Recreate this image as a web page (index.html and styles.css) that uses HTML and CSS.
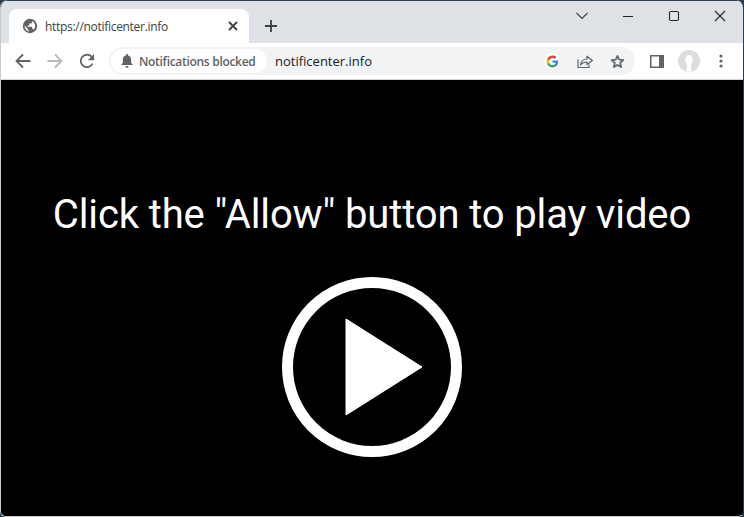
FILE: index.html
```html
<!DOCTYPE html>
<html lang="en">
<head>
<meta charset="utf-8">
<title>notificenter.info</title>
<link rel="stylesheet" href="styles.css">
</head>
<body>
<div class="window">
  <header class="tabstrip">
    <div class="tab">
      <svg class="globe" width="16" height="16" viewBox="0 0 16 16"><circle cx="8" cy="8" r="7.200" fill="#5f6368"/><path d="M6.800 13.500v-1.200c-.7 0-1.200-.5-1.200-1.200v-.6L2.600 7.500c-.1 3 1.800 5.500 4.200 6zM11.700 11.400c-.2-.4-.6-.7-1-.7h-.6V9.300c0-.3-.2-.5-.5-.5H5.600V7.400h1.300c.3 0 .5-.2.500-.5V5.500h1.500c.6 0 1-.4 1-1v-1.600c2 .9 3.300 2.900 3.300 5.100 0 1.400-.6 2.600-1.500 3.400z" fill="#fff"/></svg>
      <span class="tab-title">https://notificenter.info</span>
      <svg class="tab-close" width="10" height="10" viewBox="0 0 10 10"><path d="M1 1l8 8M9 1l-8 8" stroke="#3c4043" stroke-width="1.800" fill="none"/></svg>
    </div>
    <svg class="new-tab" width="12" height="12" viewBox="0 0 12 12"><path d="M6 0v12M0 6h12" stroke="#3c4043" stroke-width="1.800" fill="none"/></svg>
    <div class="caption">
      <svg class="cap-icon" width="46" height="14" viewBox="0 0 46 14"><path d="M17.500 4l5.500 5.500L28.500 4" stroke="#3c4043" stroke-width="1.100" fill="none"/></svg>
      <svg class="cap-icon" width="46" height="14" viewBox="0 0 46 14"><path d="M18 7.500h10" stroke="#202124" stroke-width="1.100" fill="none"/></svg>
      <svg class="cap-icon" width="46" height="14" viewBox="0 0 46 14"><rect x="18.500" y="2.500" width="9" height="9" rx="1.500" stroke="#202124" stroke-width="1.100" fill="none"/></svg>
      <svg class="cap-icon" width="46" height="14" viewBox="0 0 46 14"><path d="M18 2l10 10M28 2L18 12" stroke="#202124" stroke-width="1.100" fill="none"/></svg>
    </div>
  </header>
  <nav class="toolbar">
    <svg class="nav-icon" width="16" height="16" viewBox="0 0 16 16"><path d="M15.500 8H2M8 1.500L1.500 8 8 14.500" stroke="#5f6368" stroke-width="1.800" fill="none"/></svg>
    <svg class="nav-icon" width="16" height="16" viewBox="0 0 16 16"><path d="M.5 8H14M8 1.500L14.500 8 8 14.500" stroke="#b8babd" stroke-width="1.800" fill="none"/></svg>
    <svg class="nav-icon" width="16" height="16" viewBox="0 0 16 16"><path d="M13.600 10.500A6.200 6.200 0 1 1 12.500 3.700" stroke="#5f6368" stroke-width="1.800" fill="none"/><path d="M15 1v6.200H8.800z" fill="#5f6368"/></svg>
    <div class="omnibox">
      <div class="chip">
        <svg width="12" height="14" viewBox="0 0 12 14"><path d="M6 0c.7 0 1 .5 1 1v.6c2 .5 3.200 2.100 3.200 4.100V9L12 11H0l1.800-2V5.700c0-2 1.200-3.600 3.200-4.100V1c0-.5.300-1 1-1zM4.500 12h3C7.500 13 6.800 14 6 14s-1.500-1-1.500-2z" fill="#5f6368"/></svg>
        <span>Notifications blocked</span>
      </div>
      <span class="url">notificenter.info</span>
      <div class="omni-actions">
        <span class="g-badge">
          <svg width="13" height="13" viewBox="0 0 48 48"><path fill="#4285f4" d="M45 24.500c0-1.600-.1-3.100-.4-4.500H24v8.500h11.800c-.5 2.800-2 5.100-4.400 6.700v5.500h7.100c4.200-3.800 6.500-9.500 6.500-16.200z"/><path fill="#34a853" d="M24 46c5.900 0 10.900-2 14.500-5.300l-7.100-5.500c-2 1.300-4.500 2.100-7.400 2.100-5.700 0-10.500-3.800-12.300-9H4.400v5.700C8 41.200 15.400 46 24 46z"/><path fill="#fbbc05" d="M11.700 28.300c-.4-1.300-.7-2.800-.7-4.300s.3-3 .7-4.300V14H4.400C2.900 17 2 20.400 2 24s.9 7 2.400 10z"/><path fill="#ea4335" d="M24 10.700c3.200 0 6.100 1.100 8.400 3.300l6.300-6.300C34.900 4.100 29.900 2 24 2 15.400 2 8 6.800 4.400 14l7.300 5.700c1.800-5.200 6.600-9 12.300-9z"/></svg>
        </span>
        <svg width="16" height="16" viewBox="0 0 16 16"><path d="M1 6.500v8h11v-3" stroke="#5f6368" stroke-width="1.200" fill="none"/><path d="M3.500 12C4 8.500 6.500 6 10 6V3.200L15.300 7.500 10 11.500V9C7.500 9 5 10 3.500 12z" stroke="#5f6368" stroke-width="1.200" fill="none" stroke-linejoin="round"/></svg>
        <svg width="15" height="15" viewBox="0 0 15 15"><path d="M7.500 1.800l1.700 3.900 4.200.4-3.200 2.800 1 4.200-3.700-2.200-3.700 2.200 1-4.200L1.600 6.100l4.200-.4z" stroke="#5f6368" stroke-width="1.700" fill="none" stroke-linejoin="round"/></svg>
      </div>
    </div>
    <svg class="panel-icon" width="14" height="13" viewBox="0 0 14 13"><rect width="14" height="13" fill="#5f6368"/><rect x="1.500" y="1.500" width="7.500" height="10" fill="#fff"/></svg>
    <svg class="avatar" width="22" height="22" viewBox="0 0 22 22"><circle cx="11" cy="11" r="11" fill="#dadce0"/><path d="M11 5c2.400 0 3.700 2 3.700 4.500 0 2-1 3.500-1.800 4.800.3 2 .6 4 .7 7-1.700.6-3.500.6-5.200 0 .1-3 .4-5 .7-7-.8-1.300-1.800-2.800-1.800-4.800C7.300 7 8.600 5 11 5z" fill="#fff"/></svg>
    <svg class="menu-icon" width="4" height="14" viewBox="0 0 4 14"><circle cx="2" cy="2" r="1.600" fill="#5f6368"/><circle cx="2" cy="7" r="1.600" fill="#5f6368"/><circle cx="2" cy="12" r="1.600" fill="#5f6368"/></svg>
  </nav>
  <main class="content">
    <h1 class="headline">Click the "Allow" button to play video</h1>
    <svg class="play" width="180" height="180" viewBox="0 0 180 180"><circle cx="90" cy="90" r="84.500" stroke="#fff" stroke-width="11" fill="none"/><path d="M64 42v96l76-48z" fill="#fff" stroke="#fff" stroke-width="1" stroke-linejoin="round"/></svg>
  </main>
</div>
</body>
</html>
```
FILE: styles.css
```css
* { box-sizing: border-box; }
html, body { margin: 0; height: 100%; background: #2b3f4f; overflow: hidden; }
.window {
  width: 744px;
  height: 517px;
  border-radius: 8px 8px 6px 6px;
  overflow: hidden;
  display: flex;
  flex-direction: column;
  background: #000;
  border-left: 1px solid #c9cbce;
  border-right: 1px solid #2b3f4f;
  border-bottom: 1px solid #c9cbce;
  font-family: Roboto, "Liberation Sans", sans-serif;
}
.tabstrip {
  height: 43px;
  flex: none;
  display: flex;
  align-items: flex-end;
  background: #dee1e6;
  border-top: 1px solid #2b3f4f;
  padding-left: 8px;
}
.tab {
  width: 240px;
  height: 34px;
  background: #fff;
  border-radius: 8px 8px 0 0;
  display: flex;
  align-items: center;
  padding: 0 11px 0 13px;
}
.tab-title {
  flex: 1;
  margin-left: 7px;
  font-size: 12px;
  color: #3c4043;
  font-family: "Open Sans", Roboto, sans-serif;
  letter-spacing: -0.3px;
}
.globe, .tab-close, .new-tab { flex: none; }
.new-tab { margin: 0 0 11px 16px; }
.caption {
  margin-left: auto;
  align-self: flex-start;
  display: flex;
  margin-top: 8px;
}
.caption svg { flex: none; }
.toolbar {
  height: 37px;
  flex: none;
  display: flex;
  align-items: center;
  background: #fff;
  border-bottom: 1px solid #d3d5d8;
  padding: 0 0 0 14px;
}
.nav-icon { flex: none; margin-right: 16px; }
.omnibox {
  width: 526px;
  height: 28px;
  margin-left: -2px;
  background: #f1f3f4;
  border-radius: 14px;
  display: flex;
  align-items: center;
  padding: 0 10px 0 2px;
}
.chip {
  height: 24px;
  width: 156px;
  border-radius: 12px;
  background: #fff;
  display: flex;
  align-items: center;
  gap: 6px;
  padding-left: 10px;
  font-size: 12px;
  font-weight: 600;
  font-family: "Open Sans", Roboto, sans-serif;
  letter-spacing: -0.3px;
  color: #5f6368;
  white-space: nowrap;
}
.url {
  margin-left: 8px;
  font-size: 13px;
  font-family: "Open Sans", Roboto, sans-serif;
  color: #202124;
}
.omni-actions {
  margin-left: auto;
  display: flex;
  align-items: center;
  gap: 17px;
}
.g-badge {
  width: 16px;
  height: 16px;
  border-radius: 50%;
  background: #fff;
  display: flex;
  align-items: center;
  justify-content: center;
}
.panel-icon { flex: none; margin-left: 15px; }
.avatar { flex: none; margin-left: 14px; }
.menu-icon { flex: none; margin-left: 19px; }
.content {
  flex: 1;
  display: flex;
  flex-direction: column;
  align-items: center;
  background: #000;
  margin-right: -1px;
  margin-left: -1px;
}
.headline {
  margin: 111px 0 0;
  font-size: 40px;
  line-height: 48px;
  letter-spacing: -0.13px;
  font-weight: 400;
  color: #fff;
  font-family: Roboto, sans-serif;
  white-space: nowrap;
}
.play { margin-top: 38px; flex: none; }
```
